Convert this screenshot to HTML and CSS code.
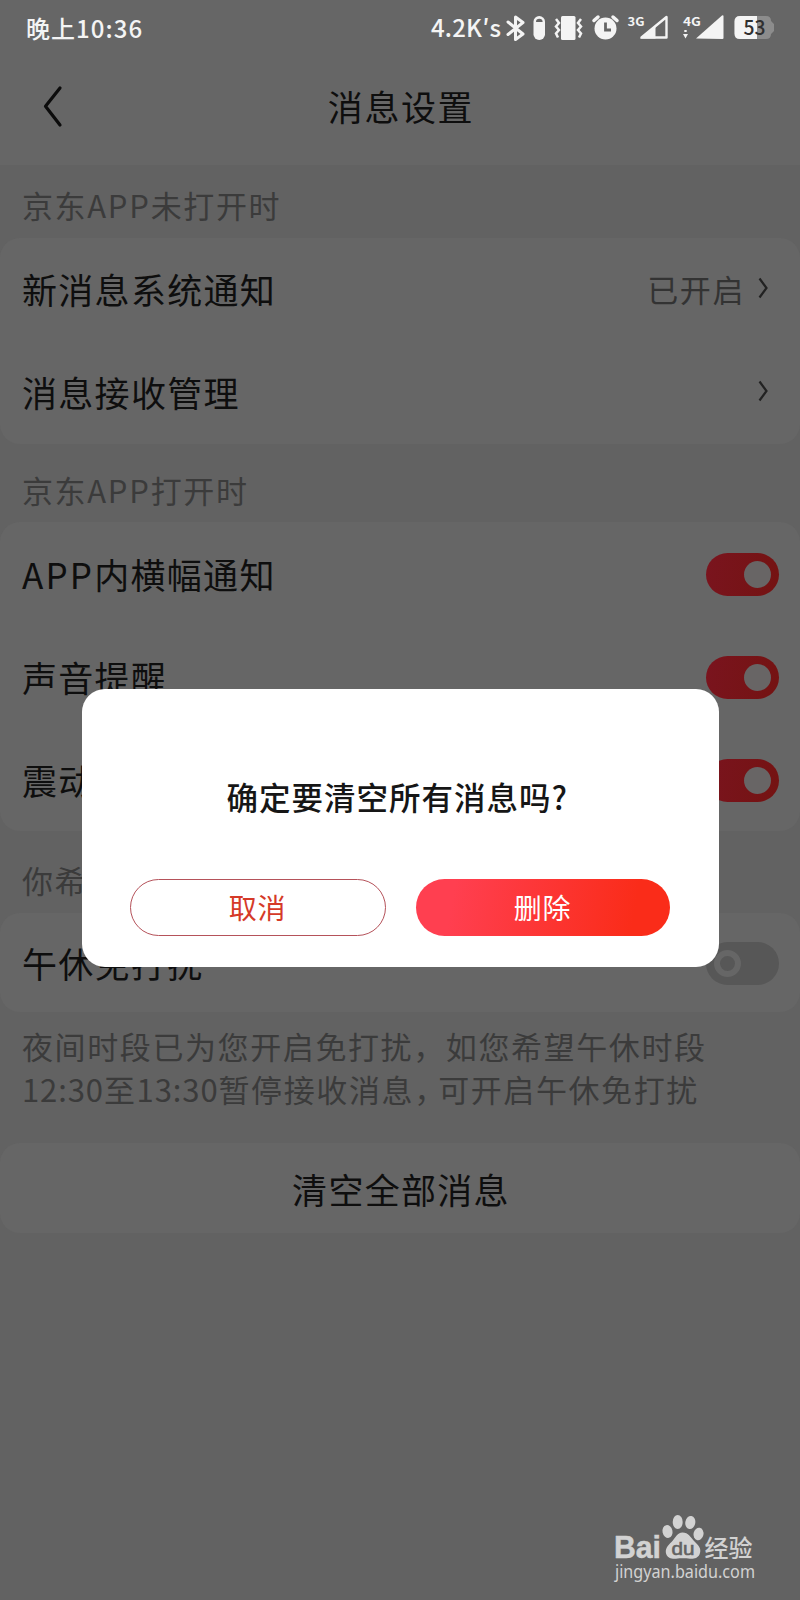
FILE: index.html
```html
<!DOCTYPE html>
<html lang="zh-CN">
<head>
<meta charset="utf-8">
<title>消息设置</title>
<link rel="stylesheet" href="styles.css">
</head>
<body>
<div class="screen">
  <header class="top">
    <div class="status">
      <span class="clock">晚上<span class="digits">10:36</span></span>
      <svg class="status-icons" viewBox="0 0 350 56" width="350" height="56">
        <g fill="#f4f4f4">
          <text x="1" y="37" font-size="24" font-weight="500" textLength="70" lengthAdjust="spacing">4.2K′s</text>
          <path d="M78 22l15 12-7.500 5.500V17L93 22.500 78 34.500" fill="none" stroke="#f4f4f4" stroke-width="3" stroke-linejoin="round" stroke-linecap="round"/>
          <rect x="103.500" y="16" width="11.500" height="24" rx="5.700"/>
          <path d="M106 22a3.300 3.300 0 0 1 6.600 0z" fill="#666"/>
          <rect x="131" y="16" width="14.500" height="24" rx="1.500"/>
          <path d="M126 19l3 4-3 3.500 3 3.500-3 3.500 2 4M151 19l-3 4 3 3.500-3 3.500 3 3.500-2 4" fill="none" stroke="#f4f4f4" stroke-width="2.500"/>
          <circle cx="175.500" cy="28.500" r="11"/>
          <path d="M164 20.500l4-3.500M187 20.500l-4-3.500" stroke="#f4f4f4" stroke-width="3.500" stroke-linecap="round"/>
          <path d="M175.500 22.500v7.500h5.500" fill="none" stroke="#666" stroke-width="2.800"/>
          <text x="197.500" y="26" font-size="12" font-weight="700" textLength="17" lengthAdjust="spacingAndGlyphs">3G</text>
          <path d="M211.500 37.500L236.500 17v20.500z" fill="none" stroke="#f4f4f4" stroke-width="2.400" stroke-linejoin="round"/>
          <path d="M210 38.500l15.500-13v13z"/>
          <text x="253" y="26" font-size="12" font-weight="700" textLength="18" lengthAdjust="spacingAndGlyphs">4G</text>
          <path d="M253 34h5l-2.500 4.500zM254.300 30h2.400v2h-2.400z"/>
          <path d="M266 38.500L292 15.500q1.500-1 1.500 1V38a1 1 0 0 1-1 1z"/>
          <path d="M310 16h26q5 0 5 5l3 3v7L341 34q0 5-5 5h-26q-5.500 0-5.500-5.500v-12q0-5.500 5.500-5.500z" fill="#8c8c8c"/>
          <path d="M310 16h17v23h-17q-5.500 0-5.500-5.500v-12q0-5.500 5.500-5.500z"/>
          <text x="313.500" y="35" font-size="20" font-weight="500" textLength="22" lengthAdjust="spacingAndGlyphs" fill="#303030">53</text>
        </g>
      </svg>
    </div>
    <div class="nav">
      <svg class="back" viewBox="0 0 24 44" width="24" height="44"><path d="M19 4L4.500 22.200 19 41" fill="none" stroke="#0c0c0c" stroke-width="3.200" stroke-linecap="round" stroke-linejoin="round"/></svg>
      <h1 class="title">消息设置</h1>
    </div>
  </header>

  <h2 class="label first">京东<span class="app">APP</span>未打开时</h2>
  <section class="group raised">
    <div class="row"><span>新消息系统通知</span><span class="value">已开启</span>
      <svg class="chev" viewBox="0 0 12 24" width="12" height="24"><path d="M2.500 2.500L9.500 12 2.500 21.500" fill="none" stroke="#222" stroke-width="2.200"/></svg></div>
    <div class="row"><span>消息接收管理</span>
      <svg class="chev" viewBox="0 0 12 24" width="12" height="24"><path d="M2.500 2.500L9.500 12 2.500 21.500" fill="none" stroke="#222" stroke-width="2.200"/></svg></div>
  </section>

  <h2 class="label second">京东<span class="app">APP</span>打开时</h2>
  <section class="group">
    <div class="row"><span><span class="app-name">APP</span>内横幅通知</span><span class="toggle on"></span></div>
    <div class="row"><span>声音提醒</span><span class="toggle on"></span></div>
    <div class="row"><span>震动提醒</span><span class="toggle on"></span></div>
  </section>

  <h2 class="label third">你希望</h2>
  <section class="group">
    <div class="row single"><span>午休免打扰</span><span class="toggle off"></span></div>
  </section>
  <p class="hint">夜间时段已为您开启免打扰，如您希望午休时段<br><span class="nums">12:30</span>至<span class="nums">13:30</span>暂停接收消息<span class="comma">，</span>可开启午休免打扰</p>
  <button class="clear">清空全部消息</button>

  <div class="dialog" role="dialog">
    <p class="question">确定要清空所有消息吗?</p>
    <div class="actions">
      <button class="btn cancel">取消</button>
      <button class="btn delete">删除</button>
    </div>
  </div>

  <svg class="watermark" viewBox="0 0 160 80" width="160" height="80">
    <g fill="#d2d2d2">
      <text class="latin" x="4" y="48" font-size="31" font-weight="700" stroke="#d2d2d2" stroke-width=".5" textLength="47" lengthAdjust="spacingAndGlyphs">Bai</text>
      <ellipse cx="57.500" cy="21.500" rx="5" ry="6.500" transform="rotate(-12 57.500 21.500)"/>
      <ellipse cx="67.700" cy="12" rx="5" ry="7"/>
      <ellipse cx="80.300" cy="12.500" rx="5" ry="6.500" transform="rotate(10 80.300 12.500)"/>
      <ellipse cx="88.500" cy="24" rx="5" ry="6.300" transform="rotate(12 88.500 24)"/>
      <path d="M72.500 22.500c6 0 8 5 12.500 9.500 5 4.500 6.500 8 4.500 12.500-2 4-6 4.500-9.500 4.200-5-.6-9-.6-14 0-4 .4-8.500-.5-9.800-4.700-1.500-5 1.500-8.500 5.300-12 4-4 5.500-9.500 11-9.500z"/>
      <text class="latin" x="61.500" y="44.500" font-size="19" fill="#626262" stroke="#626262" stroke-width=".6" textLength="23" lengthAdjust="spacingAndGlyphs">du</text>
      <text x="94.500" y="46.500" font-size="24" font-weight="500" textLength="48" lengthAdjust="spacingAndGlyphs">经验</text>
      <text class="url" x="5" y="67.500" font-size="17.500" textLength="140" lengthAdjust="spacingAndGlyphs">jingyan.baidu.com</text>
    </g>
  </svg>
</div>
</body>
</html>
```
FILE: styles.css
```css
* { box-sizing: border-box; }
body { margin: 0; background: #626262; }
.screen {
  position: relative;
  width: 800px;
  height: 1600px;
  overflow: hidden;
  background: #626262;
  color: #0e0e0e;
  font-family: "Noto Sans CJK SC", "Noto Sans", sans-serif;
}
h1, h2, p { margin: 0; font-weight: 400; }
button { border: 0; padding: 0; font: inherit; color: inherit; }
.top { height: 165px; background: #666; }
.status {
  display: flex;
  justify-content: space-between;
  height: 56px;
  padding: 0 20px 0 26px;
}
.clock {
  font-size: 24px;
  font-weight: 500;
  line-height: 55px;
  letter-spacing: 1px;
  color: #f4f4f4;
}
.digits { letter-spacing: 1.100px; }
.nav { display: flex; align-items: center; height: 100px; padding: 0 41px; }
.title {
  flex: 1;
  padding-right: 22px;
  text-align: center;
  font-size: 35px;
  letter-spacing: 1.600px;
  line-height: 50px;
}
.label {
  height: 73px;
  padding-left: 22px;
  font-size: 31px;
  letter-spacing: 1.600px;
  color: #3b3b3b;
}
.app { letter-spacing: 1.800px; }
.app-name { letter-spacing: 2.200px; }
.first { line-height: 79px; }
.second { height: 78px; line-height: 92px; }
.third { height: 82px; line-height: 97px; }
.group { border-radius: 20px; background: #666; }
.row {
  display: flex;
  align-items: center;
  height: 103px;
  padding: 0 21px 0 22px;
  font-size: 35px;
  letter-spacing: 1.300px;
}
.row > span:first-child { margin-right: auto; }
.raised .row { padding-bottom: 3px; }
.single { height: 99px; }
.value { margin-right: 12px; font-size: 31px; letter-spacing: 1.600px; color: #333; }
.chev { margin-right: 10px; }
.toggle {
  width: 73px;
  height: 43px;
  margin-top: 1px;
  padding: 8px;
  border-radius: 22px;
}
.toggle::before {
  content: "";
  box-sizing: border-box;
  display: block;
  width: 27px;
  height: 27px;
  border-radius: 50%;
}
.on { background: linear-gradient(100deg, #7a141e, #741312); }
.on::before { margin-left: 30px; background: #686565; }
.off { background: #575757; }
.off::before { border: 6px solid #666; }
.hint {
  height: 131px;
  padding: 12px 0 0 22px;
  font-size: 31px;
  line-height: 43px;
  letter-spacing: 1.600px;
  white-space: nowrap;
  color: #3b3b3b;
}
.nums { letter-spacing: .900px; }
.comma { letter-spacing: -7px; }
.clear {
  display: block;
  width: 100%;
  height: 90px;
  padding-left: 2px;
  border-radius: 20px;
  background: #666;
  font-size: 35px;
  letter-spacing: 1.300px;
}
.dialog {
  position: absolute;
  top: 689px;
  left: 81.500px;
  width: 637px;
  height: 277.500px;
  padding: 83px 49px 0 48px;
  border-radius: 23px;
  background: #fff;
}
.question {
  height: 107px;
  padding-left: 97px;
  font-size: 31.500px;
  font-weight: 500;
  line-height: 48px;
  letter-spacing: 1px;
  color: #161616;
  white-space: nowrap;
}
.actions { display: flex; gap: 30px; }
.btn {
  flex: 1;
  height: 57px;
  border-radius: 29px;
  font-size: 28px;
  line-height: 55px;
  letter-spacing: .700px;
}
.cancel { border: 1px solid #b5525a; background: #fff; color: #d53a28; }
.delete { background: linear-gradient(100deg, #ff3f50 15%, #fa2c19 85%); color: #fff; }
.watermark { position: absolute; left: 610px; top: 1510px; }
.latin { font-family: "Liberation Sans", sans-serif; }
.url { font-family: "Noto Sans", sans-serif; }
```
